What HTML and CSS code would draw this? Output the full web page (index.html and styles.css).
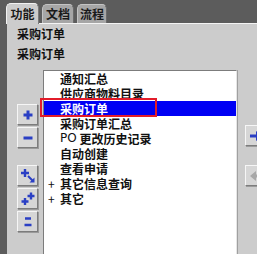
FILE: index.html
```html
<!DOCTYPE html>
<html lang="zh-CN">
	<head>
		<meta charset="UTF-8">
		<meta name="viewport" content="width=device-width, initial-scale=1">
		<title>采购订单</title>
		<link rel="stylesheet" href="styles.css">
	</head>
	<body>
		<div class="tabs">
			<div class="tab tab-active">功能</div>
			<div class="tab">文档</div>
			<div class="tab">流程</div>
		</div>

		<div class="panel">
			<div class="title">采购订单</div>
			<div class="title">采购订单</div>

			<div class="work">
				<div class="side-left">
					<div class="btn btn-first">
						<svg width="12" height="12" viewBox="0 0 12 12">
							<path d="M6 1.5v9M1.5 6h9" stroke="#2a3fc4" stroke-width="3"/>
						</svg>
					</div>
					<div class="btn">
						<svg width="12" height="12" viewBox="0 0 12 12">
							<path d="M1.5 6h9" stroke="#2a3fc4" stroke-width="3"/>
						</svg>
					</div>
					<div class="btn btn-group">
						<svg width="16" height="16" viewBox="0 0 16 16">
							<path d="M5 1v8M1 5h8" stroke="#2a3fc4" stroke-width="2.4"/>
							<path d="M8 8l5 5" stroke="#2a3fc4" stroke-width="2"/>
							<path d="M14.5 9.5v5h-5z" fill="#2a3fc4"/>
						</svg>
					</div>
					<div class="btn">
						<svg width="16" height="16" viewBox="0 0 16 16">
							<path d="M5 7v7M1.5 10.5h7" stroke="#2a3fc4" stroke-width="2.4"/>
							<path d="M11 1.5v7M7.5 5h7" stroke="#2a3fc4" stroke-width="2.4"/>
						</svg>
					</div>
					<div class="btn">
						<svg width="16" height="16" viewBox="0 0 16 16">
							<path d="M5 4.5h6M4.5 11h7" stroke="#2a3fc4" stroke-width="2.6"/>
						</svg>
					</div>
				</div>

				<div class="list">
					<div class="item"><span class="toggle"></span>通知汇总</div>
					<div class="item"><span class="toggle"></span>供应商物料目录</div>
					<div class="item item-selected"><span class="toggle"></span>采购订单<span class="mark"></span></div>
					<div class="item"><span class="toggle"></span>采购订单汇总</div>
					<div class="item"><span class="toggle"></span><span class="latin">PO</span>&nbsp;更改历史记录</div>
					<div class="item"><span class="toggle"></span>自动创建</div>
					<div class="item"><span class="toggle"></span>查看申请</div>
					<div class="item"><span class="toggle">+</span>其它信息查询</div>
					<div class="item"><span class="toggle">+</span>其它</div>
				</div>

				<div class="side-right">
					<div class="btn btn-first">
						<svg width="14" height="12" viewBox="0 0 14 12">
							<path d="M1 4.5h6v-3.5l6 5-6 5v-3.5h-6z" fill="#2a3fc4"/>
						</svg>
					</div>
					<div class="btn btn-group">
						<svg width="14" height="12" viewBox="0 0 14 12">
							<path d="M13 4.5h-6v-3.5l-6 5 6 5v-3.5h6z" fill="#a8a8a8"/>
						</svg>
					</div>
				</div>
			</div>
		</div>
	</body>
</html>
```

FILE: styles.css
```css
*{
	margin: 0;
	padding: 0;
	box-sizing: border-box;
}
body{
	width: 257px;
	height: 254px;
	overflow: hidden;
	background: #5c5c5c;
	font-family: "Noto Sans CJK SC", "DejaVu Sans", sans-serif;
	font-size: 12px;
	font-weight: bold;
	color: #111;
}
.tabs{
	display: flex;
	align-items: flex-end;
	gap: 3px;
	height: 23px;
	padding-left: 6px;
}
.tab{
	position: relative;
	width: 32px;
	height: 19px;
	line-height: 17px;
	text-align: center;
	background: #a6a6a6;
	border: 1px solid #c4c4c4;
	border-right-color: #6a6a6a;
	border-bottom: none;
	border-radius: 5px 5px 0 0;
	color: #1a1a1a;
}
.tab:last-child{
	width: 30px;
}
.tab-active{
	width: 33px;
	height: 21px;
	line-height: 19px;
	margin-bottom: -1px;
	background: #cccccc;
	border-color: #f2f2f2;
	border-right-color: #7a7a7a;
	z-index: 1;
}
.panel{
	margin-left: 7px;
	height: 231px;
	background: #cccccc;
	border-top: 1px solid #f4f4f4;
	padding-left: 10px;
}
.title{
	height: 20px;
	line-height: 20px;
}
.title:first-child{
	margin-top: 0;
}
.work{
	display: flex;
	margin-top: 6px;
}
.side-left{
	display: flex;
	flex-direction: column;
	width: 21px;
	flex: none;
	padding-top: 34px;
}
.side-left .btn + .btn{
	margin-top: 2px;
}
.side-left .btn-group{
	margin-top: 17px !important;
}
.btn{
	display: flex;
	justify-content: center;
	align-items: center;
	width: 21px;
	height: 21px;
	background: #d6d6d6;
	border: 1px solid;
	border-color: #f6f6f6 #7c7c7c #7c7c7c #f6f6f6;
	box-shadow: 1px 1px 0 #9a9a9a;
}
.list{
	width: 194px;
	height: 190px;
	margin-left: 5px;
	flex: none;
	background: #ffffff;
	border: 1px solid;
	border-color: #7c7c7c #e6e6e6 #e6e6e6 #7c7c7c;
	box-shadow: 1px 0 0 #a0a0a0;
}
.item{
	position: relative;
	display: flex;
	height: 15px;
	line-height: 15px;
	white-space: nowrap;
}
.toggle{
	width: 16px;
	flex: none;
	padding-left: 4px;
	font-weight: normal;
}
.latin{
	font-family: "DejaVu Sans", sans-serif;
	font-weight: normal;
}
.item-selected{
	background: #0000f4;
	color: #ffffff;
}
.mark{
	position: absolute;
	left: -4px;
	top: -3px;
	width: 117px;
	height: 19px;
	border: 2px solid #e21c2a;
}
.side-right{
	display: flex;
	flex-direction: column;
	margin-left: 8px;
	padding-top: 55px;
}
.side-right .btn-group{
	margin-top: 19px;
}
```
